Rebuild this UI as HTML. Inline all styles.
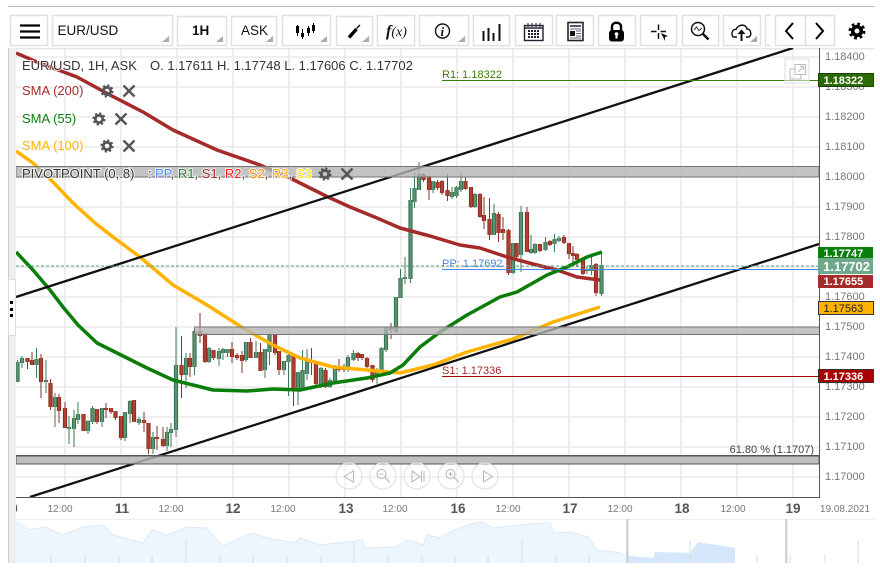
<!DOCTYPE html>
<html><head><meta charset="utf-8"><style>
html,body{margin:0;padding:0;background:#fff;width:880px;height:574px;overflow:hidden}
svg{display:block;font-family:"Liberation Sans",sans-serif}
.p{font-size:11px;fill:#777;text-anchor:start}
.t{font-size:10px;fill:#777;text-anchor:middle}
.d{font-size:13.5px;fill:#555;font-weight:bold;text-anchor:middle}
.l{font-size:13px;paint-order:stroke;stroke:#fff;stroke-width:2px;stroke-opacity:.8}
.b{fill:#fff;stroke:#e0e0e0;stroke-width:1.5}
.tri{fill:#aaa}
.x{stroke:#555;stroke-width:2.4;fill:none}
</style></head><body>
<svg width="880" height="574" viewBox="0 0 880 574" xmlns="http://www.w3.org/2000/svg">
<defs>
<clipPath id="plot"><rect x="16" y="48" width="803" height="449"/></clipPath>
<g id="gear"><circle r="3.7" fill="none" stroke="#555" stroke-width="2.8"/><circle r="5.6" fill="none" stroke="#555" stroke-width="2" stroke-dasharray="2.2 2.2"/></g>
<g id="cx"><path class="x" d="M-5.5-5.5L5.5 5.5M5.5-5.5L-5.5 5.5"/></g>
<path id="gb" d="M17.5 362V382M22 358V363M36.5 359V365M46 380V382M55 397V407M69 427V429M74 418V429M78 414V420M88 421V431M92.5 408V422M102 408V422M125 412V438M130 401V414M139 419V423M153 437V449M167 432V446M171 429V433M176 365V430M186 358V375M194.5 331V367M209 348V362M219 351V359M223 349V353M227.5 349V353M246 342V360M256 352V358M265 349V370M269.5 335V352M284 361V370M288.5 355V362M298 372V390M302.5 370V388M307 360V374M321 368V385M330 380V387M335 366V382M348 357V370M353.5 353V360M377 370V377M381.5 348V372M386 327V350M396 297V332M400.5 278V298M405 277V279M410.5 200V279M414.5 188V202M419 174V190M433 181V190M452 192V197M456.5 187V196M461 181V190M475 194V207M494 213V235M513 243V273M521 212V255M531 249V253M535 244V253M545.5 242V250M554.5 239V244M559 238V241M587 269V271M591.5 265V271M601.5 265V294"/>
<path id="rb" d="M27.5 358V362M32 360V365M41 358V382M50.5 383V407M59 397V411M65 408V428M83.5 414V431M97 409V422M106 408V410M111 408V412M115.5 411V418M121 416V438M134 400V422M144 420V423M148.5 423V449M157 437V439M163 439V446M181.5 365V375M190 358V367M200 331V336M205 333V362M213.5 350V358M232 349V357M237 355V358M242 355V361M250.5 342V358M260.5 352V371M275 335V353M279 351V370M293.5 356V390M311.5 361V363M316 361V384M325.5 370V387M339 366V370M344 367V370M358 353V358M362 354V358M367 358V367M372.5 365V380M391 327V330M423.5 174V180M429 176V190M437.5 182V188M442 181V193M447.5 190V196M465.5 181V189M471 187V207M480 194V217M484 215V221M489.5 219V235M498.5 214V233M503 229V233M508.5 230V273M516.5 243V257M527 212V252M540 244V251M550 241V245M564 237V243M569 243V254M573 253V256M577 254V260M583 259V274M596 264V293"/>
</defs>

<rect width="880" height="574" fill="#fff"/>
<rect x="8" y="6" width="867" height="1" fill="#bbb"/>

<!-- toolbar -->
<rect class="b" x="10.5" y="15.5" width="37" height="30"/>
<rect class="b" x="52.5" y="15.5" width="120" height="30"/>
<rect class="b" x="177.5" y="16.5" width="49" height="29"/>
<rect class="b" x="231.5" y="16.5" width="45" height="29"/>
<rect class="b" x="282.5" y="15.5" width="48" height="30"/>
<rect class="b" x="336.5" y="16.5" width="36" height="29"/>
<rect class="b" x="377.5" y="15.5" width="37" height="30"/>
<rect class="b" x="419.5" y="15.5" width="49" height="30"/>
<rect class="b" x="473.5" y="15.5" width="36" height="30"/>
<rect class="b" x="515.5" y="15.5" width="37" height="30"/>
<rect class="b" x="556.5" y="15.5" width="37" height="30"/>
<rect class="b" x="598.5" y="15.5" width="37" height="30"/>
<rect class="b" x="640.5" y="15.5" width="36" height="30"/>
<rect class="b" x="682.5" y="15.5" width="36" height="30"/>
<rect class="b" x="723.5" y="15.5" width="37" height="30"/>
<path d="M771 15.5H765.5V45.5H771" fill="none" stroke="#e0e0e0" stroke-width="1.5"/>
<rect class="b" x="775.5" y="15.5" width="30" height="30"/>
<rect class="b" x="805.5" y="15.5" width="29" height="30"/>
<path class="tri" d="M169 36V42H162ZM223 36V42H216ZM273 36V42H266ZM327 36V42H320ZM369 36V42H362ZM465 36V42H458ZM757 36V42H750Z"/>

<path d="M20 25.5H40M20 31.5H40M20 37.5H40" stroke="#000" stroke-width="2.2"/>
<text x="57.5" y="35" font-size="13.5" fill="#111">EUR/USD</text>
<text x="192" y="35" font-size="13.5" fill="#111" font-weight="bold">1H</text>
<text x="241" y="35" font-size="13.5" fill="#111">ASK</text>
<path d="M297.5 25V36M302.5 29V39M308.5 26V36M313.5 23V33" stroke="#000" stroke-width="1"/>
<path d="M297.5 26V33M302.5 33V37M308.5 28V33M313.5 25V31" stroke="#000" stroke-width="3"/>
<path d="M349 37.5L356.5 29" stroke="#000" stroke-width="3.4"/><path d="M356.5 28.500L360 25" stroke="#000" stroke-width="1.3"/>
<text x="386" y="36" font-family="Liberation Serif" font-style="italic" font-size="16" font-weight="bold" fill="#111">f<tspan font-weight="normal" font-size="14">(x)</tspan></text>
<circle cx="442.5" cy="31" r="7" fill="none" stroke="#111" stroke-width="1.4"/>
<text x="440.5" y="36" font-family="Liberation Serif" font-style="italic" font-weight="bold" font-size="13" fill="#111">i</text>
<path d="M483.5 31V41M488.5 28V41M493.5 33V41M499.5 24V41" stroke="#111" stroke-width="2"/>
<rect x="524.5" y="25.5" width="18.5" height="15" fill="#fff" stroke="#223" stroke-width="1.4"/>
<path d="M524.5 28H543" stroke="#223" stroke-width="1.6"/>
<path d="M528 23V27M532 23V27M536 23V27M540 23V27" stroke="#223" stroke-width="1"/>
<path d="M528 31H540M528 34H540M528 37H540" stroke="#223" stroke-width="2" stroke-dasharray="2 1"/>
<rect x="568" y="22.5" width="15" height="18" fill="#fff" stroke="#223" stroke-width="1.6"/>
<rect x="570" y="25" width="11" height="2" fill="#556"/>
<rect x="570" y="31" width="5" height="5" fill="#111"/>
<path d="M576 31H581M576 33.5H581M576 36H581M570 29H581M570 38H581" stroke="#667" stroke-width="1"/>
<path d="M612 31V26.5C612 21.5 621 21.500 621 26.5V31" fill="none" stroke="#000" stroke-width="2.4"/>
<rect x="609" y="30" width="15" height="11.5" rx="3" fill="#000"/>
<circle cx="616.5" cy="34" r="1.8" fill="#fff"/><rect x="615.500" y="34" width="2" height="4.5" fill="#fff"/>
<path d="M658.5 24.500V30M658.5 33V39M651 31.5H656.500M660.5 31.5H666" stroke="#111" stroke-width="1.5"/>
<path d="M661 33L668 36L665 37L665 41Z" fill="#111"/>
<circle cx="698" cy="29" r="6.5" fill="#fff" stroke="#111" stroke-width="1.5"/>
<path d="M703 34L708.5 39.5" stroke="#111" stroke-width="2.5"/>
<path d="M694 30L696.5 27L699 30.5L702 28" fill="none" stroke="#333" stroke-width="1"/>
<path d="M737 37H733C730.5 33 733 29 736 29.5C738 24 746 23.5 747 29C751 29 752 35 749 37H746" fill="none" stroke="#111" stroke-width="1.4"/>
<path d="M741.5 41V33" stroke="#111" stroke-width="2"/><path d="M737.5 34L741.5 29.5L745.5 34Z" fill="#111"/>
<path d="M793 23L786 31L793 39M816 23L823 31L816 39" fill="none" stroke="#000" stroke-width="2"/>
<circle cx="857" cy="31" r="4.3" fill="none" stroke="#000" stroke-width="3.6"/>
<circle cx="857" cy="31" r="7.2" fill="none" stroke="#000" stroke-width="2.6" stroke-dasharray="2.8 2.85"/>

<!-- frame -->
<rect x="8" y="48" width="867" height="1.5" fill="#e6e6e6"/>
<rect x="8" y="48" width="8" height="515" fill="#eee"/>
<rect x="8" y="48" width="1" height="515" fill="#ccc"/>
<rect x="8.5" y="279.5" width="7" height="56" fill="#fff" stroke="#ddd"/>
<rect x="10" y="301" width="3" height="3" fill="#000"/><rect x="10" y="308" width="3" height="3" fill="#000"/><rect x="10" y="314" width="3" height="3" fill="#000"/>

<!-- grid -->
<path d="M16 57H819M16 87H819M16 117H819M16 147H819M16 177H819M16 207H819M16 237H819M16 267H819M16 297H819M16 327H819M16 357H819M16 387H819M16 417H819M16 447H819M16 477H819M65 49V497M121 49V497M177 49V497M233 49V497M289 49V497M345 49V497M401 49V497M457 49V497M513 49V497M569 49V497M625 49V497M681 49V497M737 49V497M793 49V497" stroke="#eaeaea" stroke-width="1.6" fill="none"/>

<g clip-path="url(#plot)">
<!-- wicks -->
<path fill="none" stroke="#3d7a55" stroke-width="1" d="M17.5 360V382M22 356V368M36.5 348V378M46 360V393M55 393V427M69 416V444M74 410V447M78 402V424M88 420V434M92.5 406V424M102 408V427M125 412V441M130 400V423M139 417V425M153 432V454M167 427V451M171 423V447M176 327V437M186 353V388M194.5 331V375M209 347V363M219 348V366M223 348V360M227.5 349V357M246 342V362M256 341V358M265 349V378M269.5 332V365M284 361V375M288.5 352V396M298 372V405M302.5 350V390M307 349V380M321 367V388M330 378V388M335 365V383M348 355V372M353.5 350V361M377 368V384M381.5 347V373M386 327V352M396 297V333M400.5 269V298M405 257V284M410.5 188V283M414.5 172V208M419 162V190M433 181V193M452 187V199M456.5 186V198M461 173V192M475 193V208M494 204V235M513 243V274M521 206V272M531 235V254M535 243V254M545.5 237V251M554.5 234V252M559 236V242M587 267V274M591.5 257V275M601.5 253V296"/>
<path fill="none" stroke="#86312a" stroke-width="1" d="M27.5 358V369M32 352V365M41 354V398M50.5 379V410M59 394V423M65 402V428M83.5 414V431M97 409V424M106 403V418M111 408V414M115.5 411V420M121 416V440M134 400V422M144 412V432M148.5 423V454M157 426V450M163 427V447M181.5 336V398M190 353V377M200 313V343M205 333V363M213.5 350V360M232 342V363M237 353V360M242 351V373M250.5 338V358M260.5 343V371M275 335V355M279 351V375M293.5 356V406M311.5 348V375M316 361V386M325.5 368V388M339 359V372M344 364V372M358 352V361M362 354V360M367 357V368M372.5 365V382M391 323V339M423.5 173V182M429 176V200M437.5 180V190M442 180V195M447.5 173V201M465.5 177V190M471 187V208M480 193V218M484 197V229M489.5 198V240M498.5 212V242M503 217V240M508.5 229V275M516.5 243V258M527 207V252M540 244V252M550 240V246M564 235V244M569 243V259M573 246V267M577 253V267M583 259V275M596 263V296"/>
<!-- bodies -->
<g fill="none" stroke-width="4.2"><use href="#gb" stroke="#2f6e47"/><use href="#rb" stroke="#8c2a20"/></g>
<g fill="none" stroke-width="2.4"><use href="#gb" stroke="#5a9273"/><use href="#rb" stroke="#ad4030"/></g>

<!-- SMA lines -->
<g fill="none" stroke-width="3.5" stroke-linejoin="round">
<polyline stroke="#a52a2a" points="16,53 37,62 77,77 110,95 143,112 173,130 217,150 260,165 290,178 300,183 328,197 350,207 377,218 400,228 430,236 460,245 480,248 507,257 533,264 557,270 577,277 600,280"/>
<polyline stroke="#ffb300" points="16,151 33,163 53,182 73,203 95,223 113,237 140,257 173,285 207,305 243,328 273,345 300,358 333,367 367,370 400,373 433,365 467,352 513,339 553,322 600,307"/>
<polyline stroke="#0a7d0a" points="16,252 33,270 50,290 63,307 78,325 97,343 117,353 147,368 173,380 193,385 213,390 247,391 273,389 300,390 333,383 367,378 390,373 403,365 420,347 440,332 467,315 500,297 517,292 547,275 567,267 587,257 602,252"/>
</g>

<!-- trend lines -->
<path d="M16 297L793 48M30 497L819 244" stroke="#111" stroke-width="2.3" fill="none"/>

<!-- bands -->
<rect x="16" y="166.5" width="803" height="10.5" fill="#b4b4b4" fill-opacity=".8" stroke="#777" stroke-width="1"/>
<rect x="194.5" y="327" width="625" height="7.5" fill="#b4b4b4" fill-opacity=".8" stroke="#777" stroke-width="1"/>
<rect x="16" y="455.5" width="803" height="8.5" fill="#b4b4b4" fill-opacity=".85" stroke="#555" stroke-width="1"/>
<rect x="16" y="455" width="803" height="1.5" fill="#555"/>

<!-- levels -->
<path d="M16 266H819" stroke="#5aa27c" stroke-width="1" stroke-dasharray="3 2"/>
<path d="M442 80.5H819" stroke="#3a7d0a" stroke-width="1"/>
<path d="M442 269.5H819" stroke="#4a86e8" stroke-width="1"/>
<path d="M442 376.5H819" stroke="#a00000" stroke-width="1"/>
<text x="442" y="78" font-size="11" fill="#3a7d0a">R1: 1.18322</text>
<text x="442" y="267" font-size="11" fill="#4a86e8">PP: 1.17692</text>
<text x="442" y="374" font-size="11" fill="#a52a2a">S1: 1.17336</text>
<text x="814" y="453" font-size="11" fill="#444" text-anchor="end">61.80 % (1.1707)</text>
</g>

<!-- expand icon -->
<rect x="785" y="59" width="24" height="24" fill="#fff" fill-opacity=".5" stroke="#ddd"/>
<rect x="790" y="69" width="11" height="10" fill="none" stroke="#bbb"/>
<rect x="795" y="64.5" width="10.5" height="10" fill="#fff" stroke="#bbb"/>
<path d="M798 72L803 67M800 66.5H803.5V70" fill="none" stroke="#bbb"/>

<!-- axes -->
<path d="M819.5 48V497.5H16" fill="none" stroke="#555" stroke-width="1"/>
<text class="p" x="825" y="60">1.18400</text>
<text class="p" x="825" y="90">1.18300</text>
<text class="p" x="825" y="120">1.18200</text>
<text class="p" x="825" y="150">1.18100</text>
<text class="p" x="825" y="180">1.18000</text>
<text class="p" x="825" y="210">1.17900</text>
<text class="p" x="825" y="240">1.17800</text>
<text class="p" x="825" y="300">1.17600</text>
<text class="p" x="825" y="330">1.17500</text>
<text class="p" x="825" y="360">1.17400</text>
<text class="p" x="825" y="390">1.17300</text>
<text class="p" x="825" y="420">1.17200</text>
<text class="p" x="825" y="450">1.17100</text>
<text class="p" x="825" y="480">1.17000</text>

<!-- badges -->
<rect x="818.5" y="73.5" width="55" height="13" fill="#2b6a00" stroke="#1f3d10"/>
<text x="823.5" y="84" font-size="11" fill="#fff" font-weight="bold">1.18322</text>
<rect x="818" y="247" width="55" height="11" fill="#0b7f0b"/>
<text x="823.5" y="257" font-size="11" fill="#fff" font-weight="bold">1.17747</text>
<rect x="818" y="275" width="55" height="13" fill="#a52a2a"/>
<text x="823.5" y="285" font-size="11" fill="#fff" font-weight="bold">1.17655</text>
<rect x="818" y="258" width="55" height="16" fill="#6da98a"/>
<text x="823" y="271" font-size="13" fill="#fff" font-weight="bold">1.17702</text>
<rect x="818.5" y="301.5" width="55" height="13" fill="#ffb300" stroke="#333"/>
<text x="823.5" y="312" font-size="11" fill="#222">1.17563</text>
<rect x="818.5" y="369.5" width="55" height="13" fill="#a80000" stroke="#333"/>
<text x="823.5" y="380" font-size="11" fill="#fff" font-weight="bold">1.17336</text>

<!-- legend -->
<text class="l" x="22" y="70" fill="#333">EUR/USD, 1H, ASK</text>
<text class="l" x="150" y="70" fill="#333">O. 1.17611 H. 1.17748 L. 1.17606 C. 1.17702</text>
<text class="l" x="22" y="95" fill="#a52a2a">SMA (200)</text>
<text class="l" x="22" y="123" fill="#0a7d0a">SMA (55)</text>
<text class="l" x="22" y="150" fill="#ffb300">SMA (100)</text>
<text class="l" x="22" y="178" fill="#333">PIVOTPOINT (0,.8)</text>
<text class="l" x="148" y="178" fill="#333">:</text>
<text class="l" x="155" y="178" fill="#4a90ff">PP<tspan fill="#333">,</tspan><tspan fill="#2e7d32"> R1</tspan><tspan fill="#333">,</tspan><tspan fill="#a52a2a"> S1</tspan><tspan fill="#333">,</tspan><tspan fill="#ff2020"> R2</tspan><tspan fill="#333">,</tspan><tspan fill="#ff8c00"> S2</tspan><tspan fill="#333">,</tspan><tspan fill="#ffb300"> R3</tspan><tspan fill="#333">,</tspan><tspan fill="#ffee00"> S3</tspan></text>
<use href="#gear" x="107" y="91"/><use href="#cx" x="129" y="91"/>
<use href="#gear" x="99" y="119"/><use href="#cx" x="121" y="119"/>
<use href="#gear" x="107" y="146"/><use href="#cx" x="129" y="146"/>
<use href="#gear" x="325" y="174"/><use href="#cx" x="347" y="174"/>

<!-- nav buttons -->
<g fill="#fff" fill-opacity=".4" stroke="#e2e2e2" stroke-width="1.2">
<circle cx="349" cy="476" r="13"/><circle cx="383" cy="476" r="13"/><circle cx="417" cy="476" r="13"/><circle cx="451" cy="476" r="13"/><circle cx="485" cy="476" r="13"/>
</g>
<g fill="none" stroke="#b5b5b5" stroke-width="1">
<path d="M353.5 471V482L344 476.5Z"/>
<circle cx="381.5" cy="474" r="4.5"/><path d="M379.5 474H383.5M385 477.5L390 482.5"/>
<path d="M412 471V482L420 476.5ZM421.5 471V482M424 471V482"/>
<circle cx="450.5" cy="474" r="4.5"/><path d="M448.5 474H452.5M450.5 472V476M454 477.5L459 482.5"/>
<path d="M483.5 471V482L492.5 476.5Z"/>
</g>

<!-- time axis -->
<rect x="8" y="498" width="8" height="22" fill="#eee"/>
<rect x="8" y="498" width="1" height="22" fill="#ccc"/>
<text class="d" x="14" y="513">0</text>
<rect x="8" y="498" width="8" height="22" fill="#eee"/>
<rect x="8" y="498" width="1" height="22" fill="#ccc"/>
<text class="t" x="60" y="512">12:00</text><text class="d" x="122" y="513">11</text>
<text class="t" x="171" y="512">12:00</text><text class="d" x="233" y="513">12</text>
<text class="t" x="283" y="512">12:00</text><text class="d" x="346" y="513">13</text>
<text class="t" x="395" y="512">12:00</text><text class="d" x="458" y="513">16</text>
<text class="t" x="508" y="512">12:00</text><text class="d" x="570" y="513">17</text>
<text class="t" x="620" y="512">12:00</text><text class="d" x="682" y="513">18</text>
<text class="t" x="733" y="512">12:00</text><text class="d" x="793" y="513">19</text>
<text class="t" x="845" y="512">19.08.2021</text>

<!-- navigator -->
<rect x="16" y="519" width="859" height="1" fill="#eee"/>
<path d="M17 522L28 530L45 527L63 535L83 527L103 525L113 535L143 543L152 530L167 535L187 527L207 528L222 546L253 533L267 538L295 543L300 538L320 545L362 540L365 548L397 547L407 540L423 545L427 535L440 538L450 532L470 524L483 522L493 528L530 524L550 523L553 533L570 532L588 537L597 550L622 553L630 556L653 558L655 552L690 553L698 542L735 548V563H16V522Z" fill="#edf5fd"/>
<path d="M17 522L28 530L45 527L63 535L83 527L103 525L113 535L143 543L152 530L167 535L187 527L207 528L222 546L253 533L267 538L295 543L300 538L320 545L362 540L365 548L397 547L407 540L423 545L427 535L440 538L450 532L470 524L483 522L493 528L530 524L550 523L553 533L570 532L588 537L597 550L622 553" fill="none" stroke="#dbe9fb" stroke-width="1"/>
<path d="M627 554L630 556L653 558L655 552L690 553L698 542L735 548V563H627Z" fill="#d6e7fc"/>
<path d="M51 555V563M85 555V563M119 555V563M152 555V563M220 555V563M253 555V563M287 555V563M321 555V563M388 555V563M422 555V563M455 555V563M488 555V563M556 555V563M589 555V563M657 555V563M723 555V563M757 555V563M790 555V563M825 555V563M186 541V563M354 541V563M522 541V563M690 541V563M858 541V563" stroke="#e0e0e0" stroke-width="1.2"/>
<rect x="626" y="519" width="2.5" height="44" fill="#d2d2d2"/>
<rect x="785" y="519" width="2.5" height="44" fill="#d2d2d2"/>
<rect x="8" y="563" width="867" height="11" fill="#fff"/>
</svg>
</body></html>
